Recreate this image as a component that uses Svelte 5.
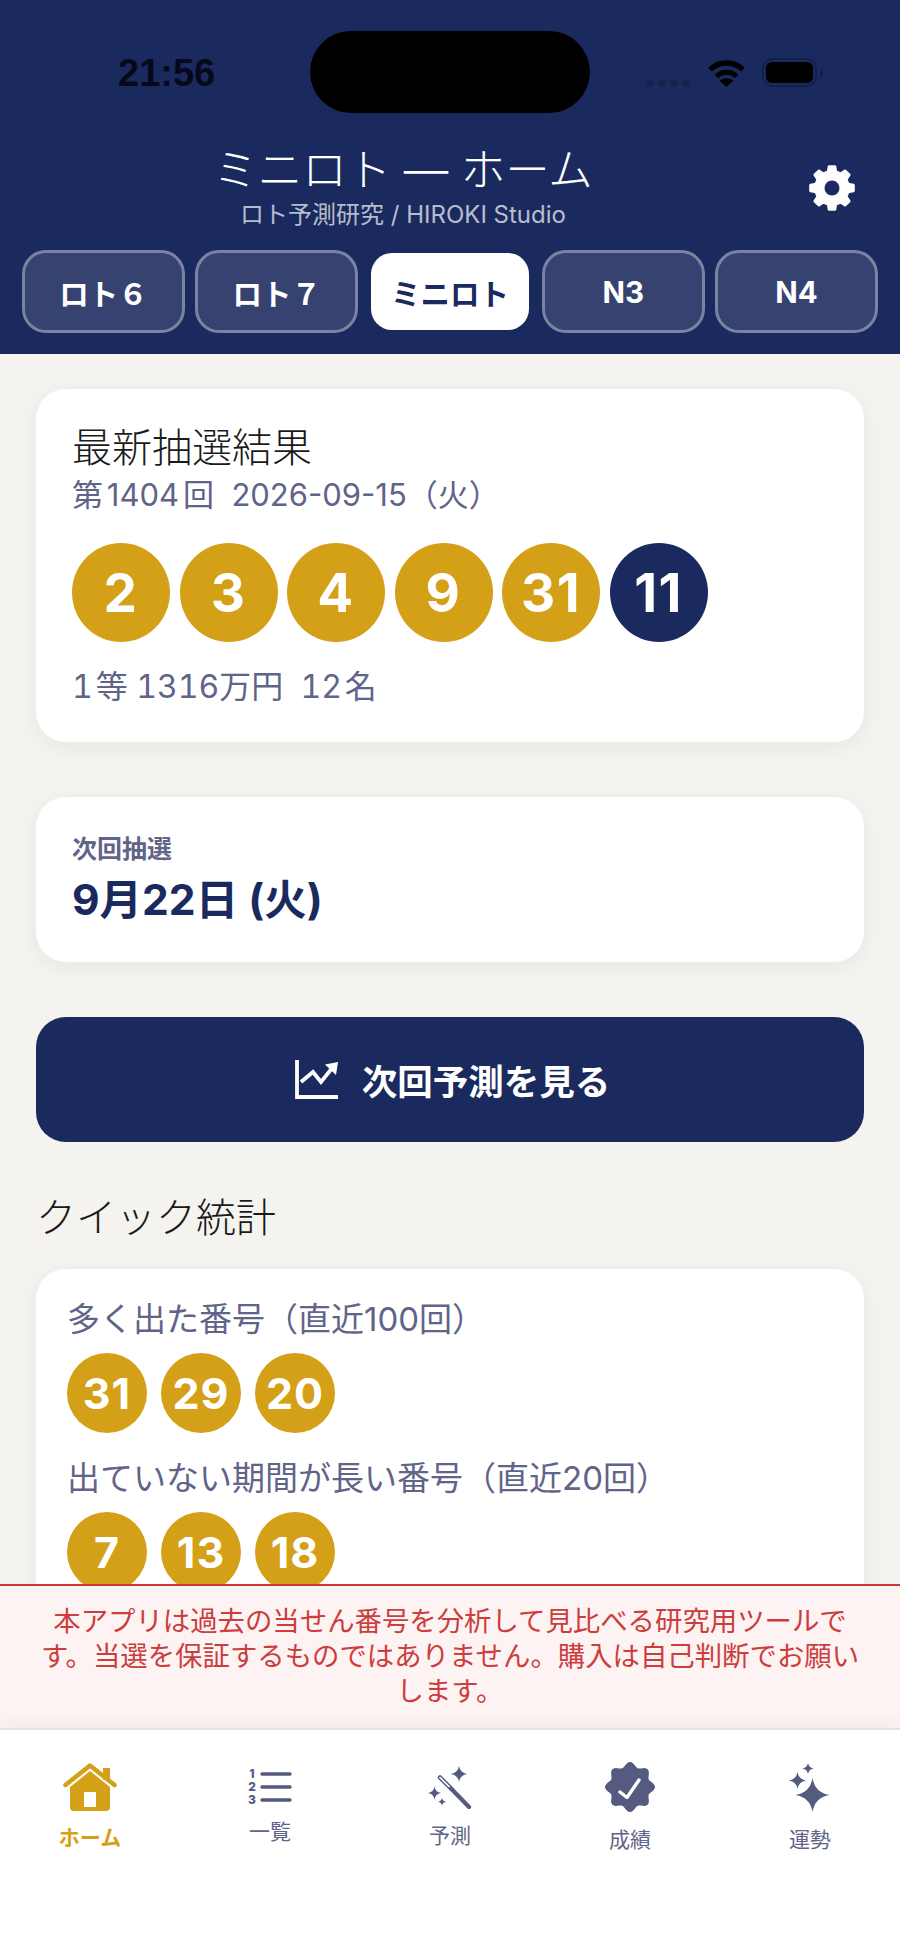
<script lang="ts">
	const tabs = ['ロト６', 'ロト７', 'ミニロト', 'N3', 'N4'];
	const mains = [2, 3, 4, 9, 31];
	const frequent = [31, 29, 20];
	const overdue = [7, 13, 18];

	// four point sparkle used by the wand and fortune tabs
	function star(cx: number, cy: number, r: number) {
		const k = r * 0.14;
		return `M${cx} ${cy - r}Q${cx + k} ${cy - k} ${cx + r} ${cy}Q${cx + k} ${cy + k} ${cx} ${cy + r}Q${cx - k} ${cy + k} ${cx - r} ${cy}Q${cx - k} ${cy - k} ${cx} ${cy - r}Z`;
	}

	function seal(cx: number, cy: number) {
		const pts = [];
		for (let i = 0; i < 96; i++) {
			const a = (i / 96) * Math.PI * 2;
			const r = 22.6 + 2.4 * Math.cos(a * 8);
			pts.push(`${(cx + r * Math.sin(a)).toFixed(2)} ${(cy - r * Math.cos(a)).toFixed(2)}`);
		}
		return 'M' + pts.join('L') + 'Z';
	}

	function gear(cx: number, cy: number) {
		const pts = [];
		for (let i = 0; i < 8; i++) {
			const a = (i / 8) * Math.PI * 2;
			const offs = [[-0.23, 16.5], [-0.13, 21.5], [0.13, 21.5], [0.23, 16.5]];
			for (const [d, r] of offs) {
				pts.push(`${(cx + r * Math.sin(a + d)).toFixed(2)} ${(cy - r * Math.cos(a + d)).toFixed(2)}`);
			}
		}
		return 'M' + pts.join('L') + 'Z';
	}
</script>

<div class="screen">
	<header class="header">
		<div class="status">
			<span class="time">21:56</span>
			<div class="island"></div>
			<div class="status-icons">
				<div class="dots"><i></i><i></i><i></i><i></i></div>
				<svg class="wifi" width="37" height="28" viewBox="0 0 37 28" fill="none" stroke="#000">
					<path d="M2 10.5A24 24 0 0 1 35 10.5" stroke-width="5.5" />
					<path d="M8.5 17.5A14 14 0 0 1 28.5 17.5" stroke-width="5" />
					<path d="M18.5 28L11.5 21.5Q18.5 17 25.5 21.5Z" fill="#000" stroke="none" />
				</svg>
				<div class="battery"><div class="cell"></div></div>
				<div class="nub"></div>
			</div>
		</div>

		<div class="title-row">
			<div class="title-block">
				<h1>ミニロト — ホーム</h1>
				<p>ロト予測研究 / HIROKI Studio</p>
			</div>
			<button class="gear" aria-label="設定">
				<svg width="46" height="46" viewBox="0 0 46 46">
					<path d={gear(23, 23)} fill="#fff" stroke="#fff" stroke-width="3" stroke-linejoin="round" />
					<circle cx="23" cy="23" r="7.5" fill="#1b2a5e" />
				</svg>
			</button>
		</div>

		<nav class="tabs">
			{#each tabs as tab}
				<button class="tab" class:active={tab === 'ミニロト'}>{tab}</button>
			{/each}
		</nav>
	</header>

	<main class="content">
		<section class="card latest">
			<h2>最新抽選結果</h2>
			<p class="meta">第1404回&nbsp; 2026-09-15（火）</p>
			<div class="balls">
				{#each mains as n}
					<span class="ball">{n}</span>
				{/each}
				<span class="ball bonus">11</span>
			</div>
			<p class="meta prize">1&#8202;等 1316万円&nbsp; 12&#8202;名</p>
		</section>

		<section class="card next">
			<p class="next-label">次回抽選</p>
			<p class="next-date">9月22日 (火)</p>
		</section>

		<button class="cta">
			<svg width="44" height="39" viewBox="0 0 44 39" fill="none" stroke="#fff" stroke-width="3.8">
				<path d="M2 0V37H43" />
				<path d="M6 22L18 12L26 22L38 7" />
				<path d="M30 4.5L43 2L41 15Z" fill="#fff" stroke="none" />
			</svg>
			次回予測を見る
		</button>

		<h3 class="section-title">クイック統計</h3>

		<section class="card stats">
			<p class="stat-label">多く出た番号（直近100回）</p>
			<div class="mini-balls">
				{#each frequent as n}
					<span class="ball mini">{n}</span>
				{/each}
			</div>
			<p class="stat-label second">出ていない期間が長い番号（直近20回）</p>
			<div class="mini-balls">
				{#each overdue as n}
					<span class="ball mini">{n}</span>
				{/each}
			</div>
		</section>
	</main>

	<div class="notice">本アプリは過去の当せん番号を分析して見比べる研究用ツールです。当選を保証するものではありません。購入は自己判断でお願いします。</div>

	<nav class="bottom">
		<div class="item home">
			<svg width="54" height="48" viewBox="0 0 54 48" fill="#d4a017">
				<path d="M7 24L27 8L47 24V44a4 4 0 0 1-4 4H11a4 4 0 0 1-4-4Z" />
				<rect x="21" y="29" width="12" height="15" fill="#fff" />
				<rect x="40" y="5" width="7" height="12" />
				<path d="M2.5 22L27 2.5L51.5 22" fill="none" stroke="#d4a017" stroke-width="4.5" stroke-linecap="round" stroke-linejoin="round" />
			</svg>
			<span>ホーム</span>
		</div>
		<div class="item list">
			<svg width="44" height="37" viewBox="0 0 44 37" fill="none" stroke="#545a80" stroke-width="3.4" stroke-linecap="round">
				<path d="M14 5H42M14 18H42M14 31H42" />
				<g class="nums" fill="#545a80" stroke="none">
					<text x="4" y="9">1</text>
					<text x="4" y="22">2</text>
					<text x="4" y="35">3</text>
				</g>
			</svg>
			<span>一覧</span>
		</div>
		<div class="item wand">
			<svg width="44" height="43" viewBox="0 0 44 43" fill="#545a80">
				<path d={star(31, 8, 8)} />
				<path d={star(6.5, 27, 6.5)} />
				<path d={star(14, 35.7, 4)} />
				<path d="M12 11.5L23 22.5" fill="none" stroke="#545a80" stroke-width="4.5" stroke-linecap="round" />
				<path d="M12 11.5L22.5 22" fill="none" stroke="#fff" stroke-width="1.6" stroke-linecap="round" />
				<path d="M23 22.5L41 41" fill="none" stroke="#545a80" stroke-width="4.2" stroke-linecap="round" />
			</svg>
			<span>予測</span>
		</div>
		<div class="item seal">
			<svg width="50" height="50" viewBox="0 0 50 50">
				<path d={seal(25, 25)} fill="#545a80" />
				<path d="M15 30L22 35.5L34 18" fill="none" stroke="#fff" stroke-width="3.4" stroke-linecap="round" stroke-linejoin="round" />
			</svg>
			<span>成績</span>
		</div>
		<div class="item sparkle">
			<svg width="42" height="49" viewBox="0 0 42 49" fill="#545a80">
				<path d={star(23.5, 32, 17)} />
				<path d={star(8.5, 17.5, 8.5)} />
				<path d={star(19, 5.5, 5.5)} />
			</svg>
			<span>運勢</span>
		</div>
	</nav>
</div>

<style>
	:global(body) {
		margin: 0;
		font-family: Inter, 'Noto Sans CJK JP', sans-serif;
	}

	.screen {
		height: 100vh;
		display: flex;
		flex-direction: column;
		overflow: hidden;
		background: #f4f3ef;
		text-autospace: no-autospace;
	}

	.header {
		flex: none;
		height: 354px;
		box-sizing: border-box;
		background: #1b2a5e;
		color: #fff;
	}

	.status {
		display: grid;
		grid-template-columns: 310px 280px 310px;
		padding-top: 31px;
	}

	.time {
		padding: 20px 0 0 118px;
		font-family: 'Liberation Sans', sans-serif;
		font-size: 38px;
		line-height: 44px;
		font-weight: 700;
		color: #05091a;
	}

	.island {
		height: 82px;
		background: #000;
		border-radius: 41px;
	}

	.status-icons {
		display: flex;
		align-items: flex-start;
		padding: 27px 0 0 56px;
	}

	.dots {
		display: flex;
		gap: 4px;
		margin: 21px 18px 0 0;
	}

	.dots i {
		width: 8px;
		height: 8px;
		border-radius: 50%;
		background: #15234f;
	}

	.wifi {
		margin: 1px 17px 0 0;
	}

	.battery {
		width: 55px;
		height: 29px;
		box-sizing: border-box;
		border: 2px solid #12204a;
		border-radius: 10px;
		padding: 2px;
	}

	.cell {
		height: 100%;
		background: #000;
		border-radius: 6px;
	}

	.nub {
		width: 3px;
		height: 8px;
		margin: 11px 0 0 3px;
		background: #12204a;
		border-radius: 0 2px 2px 0;
	}

	.title-row {
		display: flex;
		align-items: center;
		padding: 32px 20px 0 22px;
	}

	.title-block {
		flex: 1;
		text-align: center;
	}

	h1 {
		margin: 0;
		font-size: 44.5px;
		line-height: 50px;
		font-weight: 300;
	}

	.title-block p {
		margin: 5px 0 0;
		font-size: 24px;
		line-height: 30px;
		color: rgba(255, 255, 255, 0.7);
	}

	.gear {
		width: 96px;
		height: 60px;
		padding: 0;
		border: none;
		background: none;
		display: flex;
		align-items: center;
		justify-content: center;
	}

	.tabs {
		display: grid;
		grid-template-columns: repeat(5, 1fr);
		gap: 10px;
		padding: 20px 22px 0;
	}

	.tab {
		height: 83px;
		padding: 0;
		border: 3px solid rgba(255, 255, 255, 0.42);
		border-radius: 24px;
		background: rgba(255, 255, 255, 0.12);
		background-clip: padding-box;
		color: #fff;
		font-family: inherit;
		font-size: 29.5px;
		font-weight: 700;
	}

	.tab.active {
		border-color: transparent;
		background-color: #fff;
		color: #1b2a5e;
	}

	.content {
		flex: 1;
		min-height: 0;
		overflow: hidden;
		padding: 35px 36px 0;
	}

	.card {
		background: #fff;
		border-radius: 30px;
		box-shadow: 0 5px 22px rgba(30, 30, 40, 0.06);
	}

	.latest {
		height: 353px;
		box-sizing: border-box;
		padding: 34px 36px 0;
	}

	h2 {
		margin: 0;
		font-size: 40px;
		line-height: 50px;
		font-weight: 300;
		color: #1a1a1a;
	}

	.meta {
		margin: 2px 0 0;
		font-size: 31px;
		line-height: 40px;
		color: #5f6488;
		text-autospace: normal;
	}

	.balls {
		display: flex;
		gap: 9.5px;
		margin: 28px 0 0;
	}

	.ball {
		flex: none;
		width: 98px;
		height: 99px;
		border-radius: 50%;
		background: #d4a017;
		color: #fff;
		font-size: 53px;
		font-weight: 700;
		letter-spacing: 1.5px;
		display: flex;
		align-items: center;
		justify-content: center;
	}

	.bonus {
		background: #1b2a5e;
	}

	.prize {
		margin-top: 25px;
		font-size: 32px;
		text-autospace: no-autospace;
		font-variant-numeric: tabular-nums;
	}

	.next {
		height: 165px;
		box-sizing: border-box;
		margin-top: 55px;
		padding: 36px 36px 0;
	}

	.next-label {
		margin: 0;
		font-size: 25px;
		line-height: 32px;
		font-weight: 600;
		color: #5f6488;
	}

	.next-date {
		margin: 7px 0 0;
		font-size: 42.5px;
		line-height: 56px;
		font-weight: 700;
		color: #1b2a5e;
	}

	.cta {
		width: 100%;
		height: 125px;
		margin-top: 55px;
		padding: 0 0 0 5px;
		border: none;
		border-radius: 30px;
		background: #1b2a5e;
		color: #fff;
		font-family: inherit;
		font-size: 35.5px;
		font-weight: 700;
		display: flex;
		align-items: center;
		justify-content: center;
		gap: 23px;
	}

	.section-title {
		margin: 50px 0 0;
		font-size: 40px;
		line-height: 52px;
		font-weight: 300;
		color: #1a1a1a;
	}

	.stats {
		margin-top: 25px;
		padding: 29px 31px 40px;
	}

	.stat-label {
		margin: 0;
		font-size: 33px;
		line-height: 42px;
		color: #5f6488;
	}

	.second {
		margin-top: 24px;
	}

	.mini-balls {
		display: flex;
		gap: 14px;
		margin-top: 13px;
	}

	.mini {
		width: 80px;
		height: 80px;
		font-size: 43px;
		letter-spacing: 1px;
	}

	.notice {
		flex: none;
		height: 144px;
		box-sizing: border-box;
		border-top: 2px solid #c8383a;
		padding: 18px 36px 0;
		background: #fef3f3;
		color: #cc3d3d;
		font-size: 27.4px;
		line-height: 35px;
		text-align: center;
	}

	.bottom {
		flex: none;
		position: relative;
		height: 229px;
		box-sizing: border-box;
		border-top: 2px solid #e4e4ec;
		background: #fff;
		box-shadow: 0 -6px 14px rgba(40, 40, 80, 0.04);
		display: grid;
		grid-template-columns: repeat(5, 1fr);
	}

	.item {
		display: flex;
		flex-direction: column;
		align-items: center;
		color: #5f6488;
		font-size: 21px;
		line-height: 24px;
	}

	.item svg {
		display: block;
	}

	.nums {
		font-family: Inter, sans-serif;
		font-size: 12px;
		font-weight: 800;
		text-anchor: middle;
	}

	.home {
		padding-top: 33px;
		color: #d4a017;
		font-weight: 700;
	}

	.home span {
		margin-top: 15px;
	}

	.list {
		padding-top: 39px;
	}

	.list span {
		margin-top: 14px;
	}

	.wand {
		padding-top: 36px;
	}

	.wand span {
		margin-top: 15px;
	}

	.seal {
		padding-top: 32px;
	}

	.seal span {
		margin-top: 16px;
	}

	.sparkle {
		padding-top: 33px;
	}

	.sparkle span {
		margin-top: 16px;
	}
</style>
